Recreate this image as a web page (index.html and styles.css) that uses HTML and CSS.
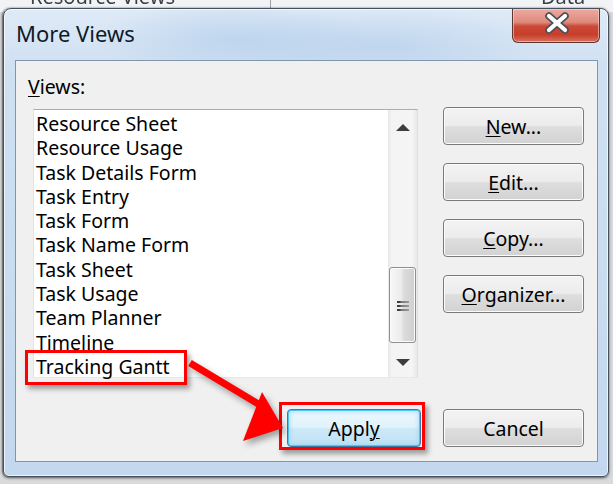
FILE: index.html
```html
<!DOCTYPE html>
<html lang="en">
<head>
<meta charset="utf-8">
<title>More Views</title>
<link rel="stylesheet" href="styles.css">
</head>
<body>
<div class="desktop">
  <div class="behind">
    <div class="behind-row">
      <span class="behind-left">Resource Views</span>
      <span class="behind-sep"></span>
      <span class="behind-right">Data</span>
    </div>
  </div>
  <div class="window">
    <div class="titlebar">
      <span class="title">More Views</span>
      <button class="close" aria-label="Close">
        <svg width="26" height="22" viewBox="0 0 26 22">
          <path d="M5 4 L21 18 M21 4 L5 18" stroke="#4b4f55" stroke-width="7.5" stroke-linecap="round" fill="none"/>
          <path d="M5 4 L21 18 M21 4 L5 18" stroke="#ffffff" stroke-width="4.2" stroke-linecap="round" fill="none"/>
        </svg>
      </button>
    </div>
    <div class="content">
      <div class="label"><u>V</u>iews:</div>
      <div class="main">
        <div class="listbox">
          <ul class="items">
            <li>Resource Sheet</li>
            <li>Resource Usage</li>
            <li>Task Details Form</li>
            <li>Task Entry</li>
            <li>Task Form</li>
            <li>Task Name Form</li>
            <li>Task Sheet</li>
            <li>Task Usage</li>
            <li>Team Planner</li>
            <li>Timeline</li>
            <li class="marked">Tracking Gantt<span class="callout callout-item"></span></li>
          </ul>
          <div class="scrollbar">
            <span class="sb-btn"><span class="tri tri-up"></span></span>
            <div class="track">
              <div class="thumb">
                <span class="grip"></span>
                <span class="grip"></span>
                <span class="grip"></span>
              </div>
            </div>
            <span class="sb-btn sb-btn-down"><span class="tri tri-down"></span></span>
          </div>
        </div>
        <div class="side">
          <button class="btn"><span><u>N</u>ew...</span></button>
          <button class="btn"><span><u>E</u>dit...</span></button>
          <button class="btn"><span><u>C</u>opy...</span></button>
          <button class="btn"><span><u>O</u>rganizer...</span></button>
        </div>
      </div>
      <div class="footer">
        <div class="apply-wrap">
          <button class="btn btn-default"><span>Appl<u>y</u></span></button>
          <span class="callout callout-apply"></span>
        </div>
        <button class="btn"><span>Cancel</span></button>
      </div>
      <svg class="pointer" width="581" height="400" viewBox="0 0 581 400">
        <line x1="174" y1="302" x2="244" y2="344" stroke="#ff0000" stroke-width="7" stroke-linecap="butt"/>
        <polygon points="267,367 246,331 227,380" fill="#ff0000"/>
      </svg>
    </div>
  </div>
</div>
</body>
</html>
```
FILE: styles.css
```css
* { box-sizing: border-box; }

html, body {
  margin: 0;
  padding: 0;
}

body {
  width: 613px;
  height: 484px;
  overflow: hidden;
  background: #d6d7d9;
  font-family: "Noto Sans", "Open Sans", sans-serif;
  color: #000;
}

.desktop {
  width: 613px;
  height: 484px;
  display: flex;
  flex-direction: column;
  background: linear-gradient(to bottom, #f2f3f5 0, #f2f3f5 12px, #d9dadc 12px);
}

/* application visible behind the dialog */
.behind {
  height: 8px;
  overflow: hidden;
  flex: none;
}

.behind-row {
  display: flex;
  align-items: flex-start;
  height: 26px;
  margin-top: -13px;
  font-size: 20px;
  line-height: 20px;
  color: #3a3f48;
}

.behind-left {
  margin-left: 30px;
  width: 240px;
  filter: blur(0.6px);
}

.behind-sep {
  width: 1px;
  height: 26px;
  background: #9aa0a8;
}

.behind-right {
  margin-left: 270px;
  filter: blur(0.6px);
}

/* dialog window */
.window {
  flex: none;
  width: 606px;
  height: 469px;
  margin-left: 3px;
  display: flex;
  flex-direction: column;
  border: 1px solid #46505c;
  border-radius: 8px 8px 6px 6px;
  background:
    radial-gradient(ellipse 140px 40px at 230px 30px, rgba(160, 195, 230, 0.45), transparent),
    radial-gradient(ellipse 160px 40px at 380px 36px, rgba(150, 188, 226, 0.35), transparent),
    linear-gradient(to bottom, #dfeaf7 0, #cfe0f2 60px, #c3d8ee 100%);
  box-shadow: inset 0 0 0 1px rgba(255, 255, 255, 0.7), 0 1px 3px rgba(0, 0, 0, 0.55), -1px 0 2px rgba(0, 0, 0, 0.4);
  padding: 0 10px 14px 11px;
}

.titlebar {
  flex: none;
  height: 51px;
  margin: 0 -10px 0 -11px;
  padding-left: 12px;
  display: flex;
  justify-content: space-between;
  align-items: flex-start;
}

.title {
  margin-top: 11px;
  font-size: 22px;
  line-height: 26px;
  color: #0f1a28;
}

.close {
  width: 88px;
  height: 34px;
  margin-right: 8px;
  padding: 0 0 5px 2px;
  display: flex;
  align-items: center;
  justify-content: center;
  border: 1px solid #5e3531;
  border-top: none;
  border-radius: 0 0 6px 6px;
  background: linear-gradient(to bottom, #ecaaa0 0%, #df8a7d 40%, #cb4a36 52%, #c63f2b 78%, #d9735f 100%);
  box-shadow: inset 0 0 0 1px rgba(255, 220, 210, 0.55);
}

.close svg { display: block; }

.content {
  flex: 1;
  position: relative;
  display: flex;
  flex-direction: column;
  border: 1px solid #8195ad;
  background: #f0f0f0;
  padding: 0 13px 0 12px;
}

u {
  text-decoration: underline;
  text-underline-offset: 2px;
  text-decoration-thickness: 1px;
}

.label {
  margin-top: 14px;
  font-size: 19.5px;
  line-height: 24px;
  height: 24px;
}

.main {
  margin-top: 8px;
  display: flex;
  align-items: flex-start;
}

.listbox {
  margin-top: 2px;
  margin-left: 5px;
  width: 385px;
  height: 269px;
  display: flex;
  background: #fff;
  border: 1px solid;
  border-color: #abadb3 #dbdfe6 #e3e9ef #e2e3ea;
}

.items {
  flex: 1;
  list-style: none;
  margin: 0;
  padding: 2px 0 0 2px;
  font-size: 19.5px;
  line-height: 24.3px;
}

.items li {
  position: relative;
  white-space: nowrap;
}

.scrollbar {
  width: 29px;
  display: flex;
  flex-direction: column;
  background: linear-gradient(to right, #e6e6e6 0, #f3f3f3 3px, #f5f5f5 24px, #e8e8e8 29px);
}

.sb-btn {
  height: 34px;
  flex: none;
  display: flex;
  align-items: center;
  justify-content: center;
}

.sb-btn-down { height: 30px; }

.tri {
  width: 0;
  height: 0;
  border-left: 7px solid transparent;
  border-right: 7px solid transparent;
}

.tri-up { border-bottom: 7px solid #3d3d3d; }
.tri-down { border-top: 7px solid #3d3d3d; }

.track {
  flex: 1;
  padding: 123px 1px 0 1px;
}

.thumb {
  height: 76px;
  border: 1px solid #8e8f8f;
  border-radius: 3px;
  background: linear-gradient(to right, #f7f7f7 0%, #ececec 45%, #dcdcdc 55%, #cfcfcf 100%);
  box-shadow: inset 0 0 0 1px #fbfbfb;
  display: flex;
  flex-direction: column;
  align-items: center;
  justify-content: center;
  gap: 2px;
  padding-top: 2px;
}

.grip {
  width: 12px;
  height: 2px;
  background: linear-gradient(to right, #3f3f3f 0, #3f3f3f 3px, #777 4px, #9a9a9a 100%);
}

.side {
  margin-left: 25px;
  display: flex;
  flex-direction: column;
  gap: 18px;
}

.btn {
  width: 141px;
  height: 38px;
  padding: 2px 0 0 0;
  display: flex;
  align-items: center;
  justify-content: center;
  border: 1px solid #7a7a7a;
  border-radius: 4px;
  background: linear-gradient(to bottom, #f3f3f3 0%, #ececec 48%, #dedede 52%, #d2d2d2 100%);
  box-shadow: inset 0 0 0 1px #fbfbfb;
  font-family: "Noto Sans", "Open Sans", sans-serif;
  font-size: 19.5px;
  line-height: 24px;
  color: #000;
}

.footer {
  margin-top: 31px;
  display: flex;
  justify-content: flex-end;
  gap: 22px;
}

.apply-wrap { position: relative; }

.btn-default {
  width: 134px;
  border-color: #3b7bab;
  background: linear-gradient(to bottom, #eef8fe 0%, #e0f2fc 48%, #cde9f8 52%, #bfe2f5 100%);
  box-shadow: inset 0 0 0 1px #4ec4f2, inset 0 0 4px 2px rgba(150, 215, 245, 0.7);
}

/* red annotation boxes */
.callout {
  position: absolute;
  border: 3px solid #ff0000;
  box-shadow: 3px 4px 5px rgba(0, 0, 0, 0.35);
  pointer-events: none;
}

.callout-item {
  left: -11px;
  top: -5px;
  width: 162px;
  height: 35px;
}

.callout-apply {
  left: -8px;
  top: -7px;
  width: 146px;
  height: 48px;
}

.pointer {
  position: absolute;
  left: 0;
  top: 0;
  pointer-events: none;
  filter: drop-shadow(3px 4px 3px rgba(0, 0, 0, 0.35));
}
```
